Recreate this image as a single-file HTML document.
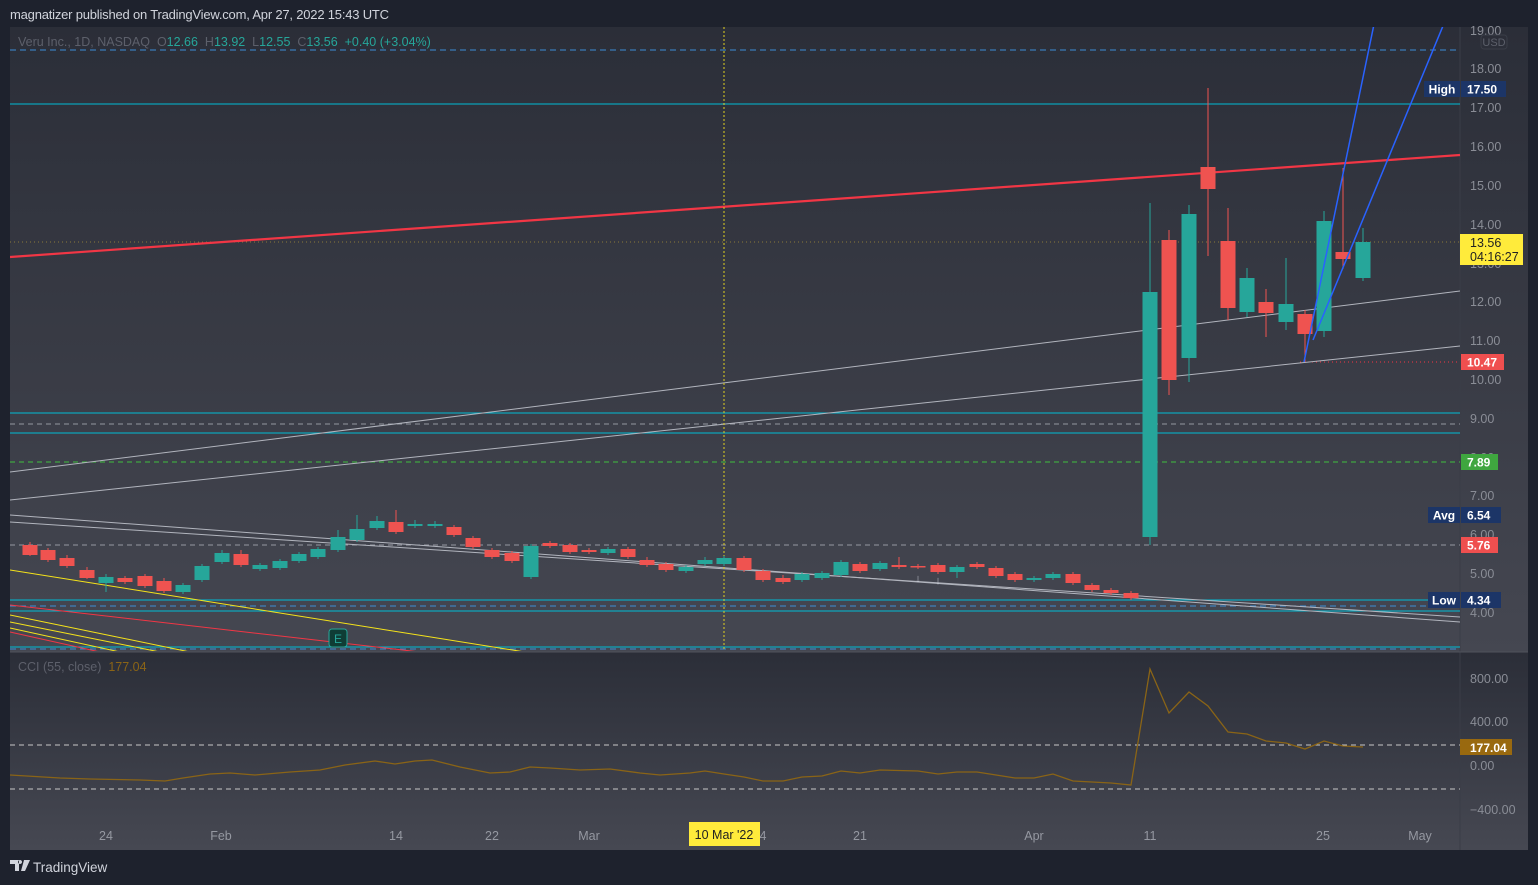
<!DOCTYPE html>
<html><head><meta charset="utf-8"><style>
html,body{margin:0;padding:0;background:#1e222d;width:1538px;height:885px;overflow:hidden;font-family:"Liberation Sans",sans-serif}
#c{position:absolute;left:0;top:0}
</style></head><body>
<svg id="c" width="1538" height="885" xmlns="http://www.w3.org/2000/svg">
<defs>
<linearGradient id="g" x1="0" y1="0" x2="0" y2="1"><stop offset="0" stop-color="#2b2e38"/><stop offset="1" stop-color="#454751"/></linearGradient>
<linearGradient id="g2" x1="0" y1="0" x2="0" y2="1"><stop offset="0" stop-color="#2b2e38"/><stop offset="1" stop-color="#464852"/></linearGradient>
<clipPath id="cp"><rect x="10" y="27" width="1450" height="624"/></clipPath>
</defs>
<rect x="0" y="0" width="1538" height="885" fill="#1e222d"/>
<text x="10" y="19" fill="#d1d4dc" font-size="13" letter-spacing="-0.2">magnatizer published on TradingView.com, Apr 27, 2022 15:43 UTC</text>
<rect x="10" y="27" width="1518" height="625" fill="url(#g)"/>
<rect x="10" y="652" width="1518" height="198" fill="url(#g2)"/>
<line x1="1460" y1="27" x2="1460" y2="850" stroke="#3a3d47"/>
<line x1="10" y1="652" x2="1528" y2="652" stroke="#50535c"/>
<g id="main" clip-path="url(#cp)"></g>
<g id="ovl"></g>
</svg>
<script>
const NS="http://www.w3.org/2000/svg";
const m=document.getElementById('main'),o=document.getElementById('ovl');
function el(p,t,a,txt){const e=document.createElementNS(NS,t);for(const k in a)e.setAttribute(k,a[k]);if(txt!==undefined)e.textContent=txt;p.appendChild(e);return e}
function L(p,x1,y1,x2,y2,s,w,d){const a={x1,y1,x2,y2,stroke:s,'stroke-width':w||1};if(d)a['stroke-dasharray']=d;el(p,'line',a)}
L(m,10,50,1460,50,'#3d8ed6',1,'6 4');
L(m,10,104,1460,104,'#00bcd4',1);
L(m,10,413,1460,413,'#00bcd4',1);
L(m,10,433,1460,433,'#00bcd4',1);
L(m,10,424,1460,424,'#9598a1',1,'5 4');
L(m,10,545,1460,545,'#9598a1',1,'5 4');
L(m,10,462,1460,462,'#3fbf3f',1,'5 4');
L(m,10,600,1460,600,'#00bcd4',1);
L(m,10,606,1460,606,'#3d8ed6',1,'6 4');
L(m,10,611,1460,611,'#00bcd4',1);
L(m,10,647,1460,647,'#00bcd4',1);
L(m,10,649,1460,649,'#3d8ed6',1,'6 4');
L(m,10,242,1460,242,'#8a7a3a',1,'1 3');
L(m,1300,362,1460,362,'#f23645',1,'1 3');
L(m,10,257,1460,155,'#f23645',2.2);
L(m,10,472,1460,291,'#b2b5be',1);
L(m,10,500,1460,346,'#b2b5be',1);
L(m,10,515,1460,622,'#b2b5be',1);
L(m,10,522,1460,617,'#b2b5be',1);
L(m,10,570,525,652,'#f5e31a',1);
L(m,10,615,190,652,'#f5e31a',1);L(m,10,622,160,652,'#f5e31a',1);L(m,10,628,120,652,'#f5e31a',1);
L(m,10,605,420,652,'#f23645',1);L(m,10,632,100,652,'#f23645',1);
L(m,724,27,724,820,'#e0d020',1,'2 2');
const C=[[30,545,555,542,556],[48,550,560,548,562],[67,558,566,555,568],[87,570,578,567,579],[106,583,577,574,592],[125,578,582,576,584],[145,576,586,574,588],[164,581,591,578,593],[183,592,585,583,594],[202,580,566,564,582],[222,562,553,550,564],[241,554,565,550,567],[260,569,565,563,571],[280,568,561,559,570],[299,561,554,552,563],[318,557,549,547,559],[338,550,537,530,552],[357,540,529,515,542],[377,528,521,516,530],[396,522,532,510,534],[415,526,524,520,528],[435,526,524,521,528],[454,527,535,525,537],[473,538,547,536,549],[492,550,557,548,559],[512,553,561,551,563],[531,577,546,544,579],[550,543,546,541,548],[570,545,552,543,554],[589,550,552,548,554],[608,553,549,547,555],[628,549,557,547,559],[647,560,565,557,567],[666,564,570,562,572],[686,571,567,565,573],[705,564,560,557,566],[724,564,558,556,566],[744,558,570,556,572],[763,571,580,569,582],[783,578,582,575,584],[802,580,574,572,582],[822,578,573,571,580],[841,575,562,560,577],[860,564,571,562,573],[880,569,563,561,571],[899,565,567,557,569],[918,566,567,564,569],[938,565,572,563,574],[957,572,567,565,578],[977,564,567,562,569],[996,568,576,566,578],[1015,574,580,572,582],[1034,580,578,576,582],[1053,578,574,572,580],[1073,574,583,572,585],[1092,585,590,583,592],[1111,590,593,588,595],[1131,593,598,591,600],[1150,537,292,203,545],[1169,240,380,230,395],[1189,358,214,205,382],[1208,167,189,88,256],[1228,241,308,208,320],[1247,312,278,268,317],[1266,302,313,289,337],[1286,322,304,258,330],[1305,314,334,310,362],[1324,331,221,211,337],[1343,252,259,168,269],[1363,278,242,228,281]];
for(const [x,op,cl,h,l] of C){const up=cl<op;const col=up?'#26a69a':'#ef5350';
L(m,x,h,x,l,col,1);const t=Math.min(op,cl),b=Math.max(op,cl);el(m,'rect',{x:x-7.5,y:t,width:15,height:Math.max(b-t,1.5),fill:col});}
L(m,1304,362,1378,5,'#2962ff',1.5);
L(m,1313,340,1450,9,'#2962ff',1.5);
el(m,'rect',{x:329,y:629,width:18,height:18,rx:3,fill:'#0f3d35',stroke:'#26a69a'});
el(m,'text',{x:338,y:643,'font-size':12,fill:'#26a69a','text-anchor':'middle'},'E');
el(m,'text',{x:918,y:582,'font-size':11,fill:'#c0c3cc','text-anchor':'middle'},'↓');
el(m,'text',{x:938,y:584,'font-size':11,fill:'#c0c3cc','text-anchor':'middle'},'↓');
const lg=el(o,'text',{x:18,y:46,'font-size':12.5,fill:'#5d606b'});
lg.innerHTML='Veru Inc., 1D, NASDAQ  O<tspan fill="#26a69a">12.66</tspan>  H<tspan fill="#26a69a">13.92</tspan>  L<tspan fill="#26a69a">12.55</tspan>  C<tspan fill="#26a69a">13.56</tspan>  <tspan fill="#26a69a">+0.40 (+3.04%)</tspan>';
lg.style.whiteSpace='pre';
const P=[[19,31],[18,69],[17,108],[16,147],[15,186],[14,225],[13,264],[12,302],[11,341],[10,380],[9,419],[8,458],[7,496],[6,535],[5,574],[4,613]];
for(const [p,y] of P)el(o,'text',{x:1470,y:y+4,'font-size':12.5,fill:'#8a8d96'},p.toFixed(2));
el(o,'rect',{x:1481,y:35,width:26,height:14,rx:3,fill:'none',stroke:'#3a3d47'});
el(o,'text',{x:1494,y:46,'font-size':11,fill:'#5d606b','text-anchor':'middle'},'USD');
function tag(x,y,w,h,bg,txt,fc,anchor){el(o,'rect',{x,y,width:w,height:h,fill:bg});el(o,'text',{x:x+(anchor?w/2:6),y:y+h/2+4.5,'font-size':12,fill:fc,'font-weight':'bold','text-anchor':anchor?'middle':'start'},txt);}
tag(1424,81,36,16,'#1c3567','High','#fff',1);tag(1461,81,45,16,'#1c3567','17.50','#fff');
el(o,'rect',{x:1460,y:234,width:63,height:31,fill:'#ffeb3b'});
el(o,'text',{x:1470,y:247,'font-size':12.5,fill:'#222'},'13.56');
el(o,'text',{x:1470,y:261,'font-size':12.5,fill:'#222'},'04:16:27');
tag(1461,354,43,16,'#ef4f4f','10.47','#fff');
tag(1461,454,37,16,'#3fa63f','7.89','#fff');
tag(1428,507,32,16,'#1c3567','Avg','#fff',1);tag(1461,507,40,16,'#1c3567','6.54','#fff');
tag(1461,537,37,16,'#ef4f4f','5.76','#fff');
tag(1428,592,32,16,'#1c3567','Low','#fff',1);tag(1461,592,40,16,'#1c3567','4.34','#fff');
const ct=el(o,'text',{x:18,y:671,'font-size':12.5,fill:'#5d606b'});ct.innerHTML='CCI (55, close)  <tspan fill="#8a6416">177.04</tspan>';ct.style.whiteSpace='pre';
L(o,10,745,1460,745,'#c8c8c8',1,'5 4');L(o,10,789,1460,789,'#c8c8c8',1,'5 4');
const cp=[[10,775],[60,778],[90,779],[140,780],[165,781],[183,778],[210,774],[230,773],[255,775],[290,772],[320,770],[345,765],[375,761],[395,764],[415,761],[432,760],[460,767],[490,773],[510,772],[530,767],[550,768],[580,770],[610,769],[640,773],[660,775],[690,773],[705,771],[724,774],[744,777],[763,781],[783,781],[802,777],[822,776],[841,771],[860,773],[880,770],[918,771],[938,774],[957,772],[977,772],[996,775],[1015,778],[1034,778],[1053,774],[1073,781],[1092,782],[1111,783],[1131,785],[1150,669],[1169,713],[1189,692],[1208,706],[1228,732],[1247,734],[1266,741],[1286,743],[1305,749],[1324,741],[1343,746],[1363,747]];
el(o,'polyline',{points:cp.map(p=>p.join(',')).join(' '),fill:'none',stroke:'#8a6416','stroke-width':1.3});
for(const [v,y] of [['800.00',679],['400.00',722],['0.00',766],['−400.00',810]])el(o,'text',{x:1470,y:y+4,'font-size':12.5,fill:'#8a8d96'},v);
el(o,'rect',{x:1460,y:739,width:52,height:16,fill:'#99690f'});
el(o,'text',{x:1470,y:752,'font-size':12,fill:'#fff','font-weight':'bold'},'177.04');
for(const [t,x] of [['24',106],['Feb',221],['14',396],['22',492],['Mar',589],['4',763],['21',860],['Apr',1034],['11',1150],['25',1323],['May',1420]])el(o,'text',{x,y:840,'font-size':12.5,fill:'#9598a1','text-anchor':'middle'},t);
el(o,'rect',{x:689,y:822,width:71,height:24,fill:'#ffeb3b'});
el(o,'text',{x:724,y:839,'font-size':12.5,fill:'#222','text-anchor':'middle'},"10 Mar '22");
el(o,'path',{d:'M10 860h9v11h-4v-7h-5z M20 860a2 2 0 1 0 0.1 0z M24 860h6l-5 11h-4z',fill:'#d1d4dc'});
el(o,'text',{x:33,y:872,'font-size':13.5,fill:'#d1d4dc'},'TradingView');
</script>
</body></html>
